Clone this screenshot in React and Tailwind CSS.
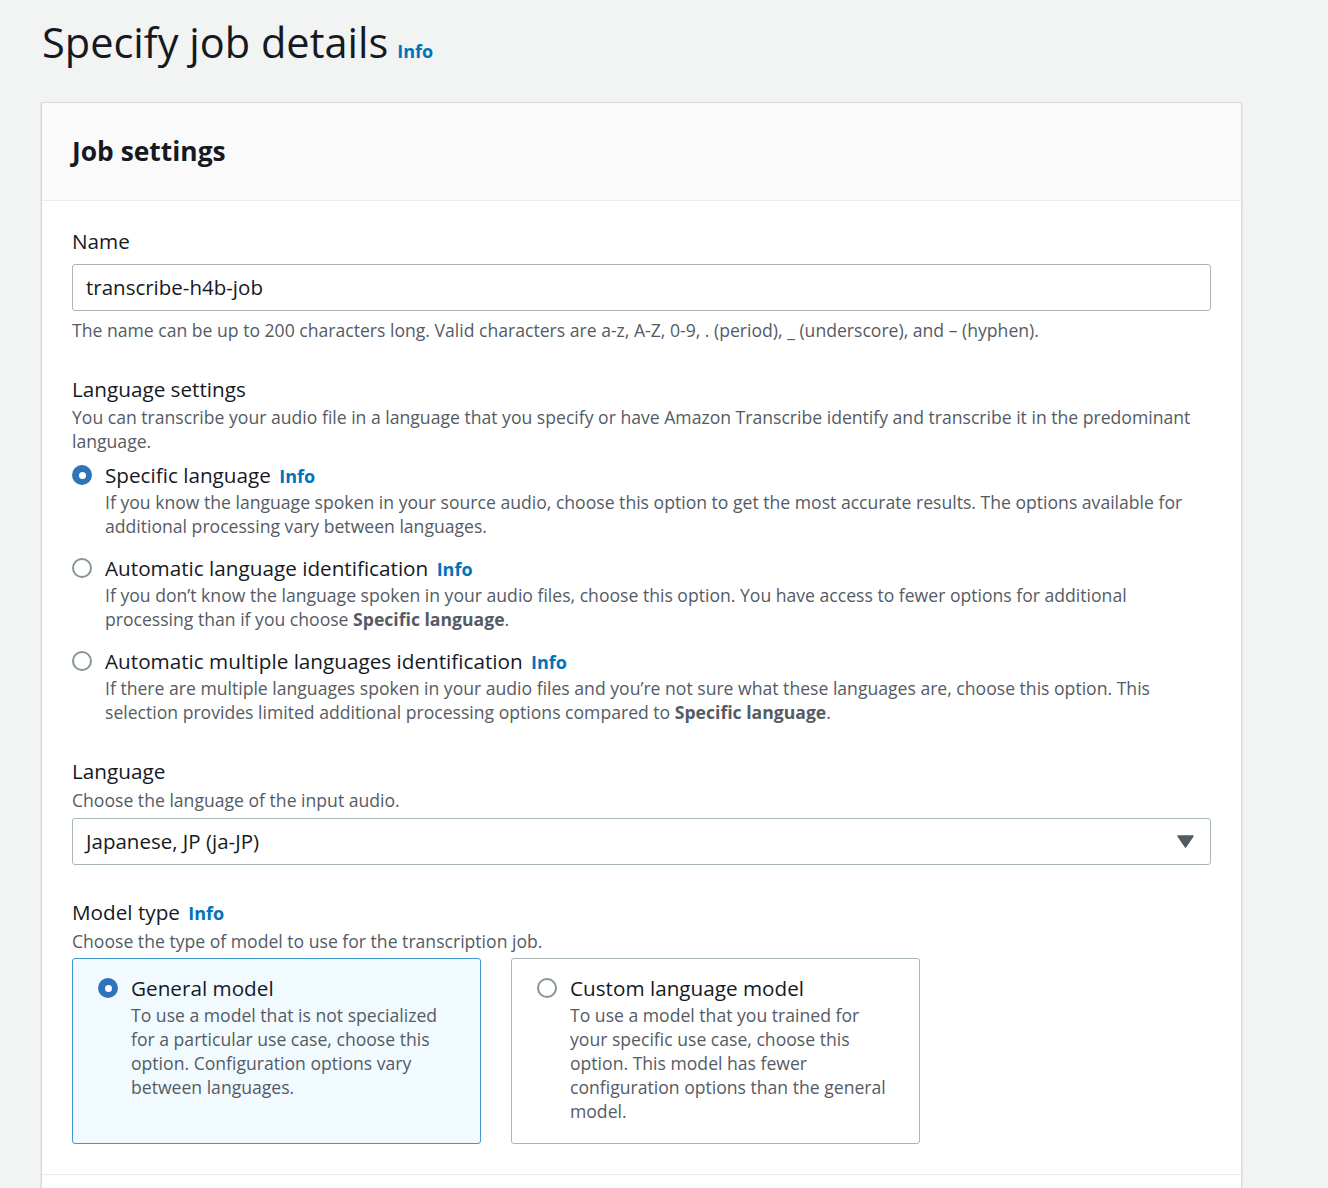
import React, { useState } from "react"

// small blue "Info" link used beside labels
const Info = ({ className = "" }) => (
  <span className={`font-bold text-[#0073bb] ${className}`}>Info</span>
)

const Radio = ({ checked }) =>
  checked ? (
    <span className="flex h-[20px] w-[20px] shrink-0 items-center justify-center rounded-full bg-[#2f73b8]">
      <span className="block h-[7px] w-[7px] rounded-full bg-white" />
    </span>
  ) : (
    <span className="block h-[20px] w-[20px] shrink-0 rounded-full border-2 border-[#879596] bg-white" />
  )

const LangOption = ({ checked, title, children }) => (
  <div className="flex gap-[13px]">
    <div className="pt-[4px]">
      <Radio checked={checked} />
    </div>
    <div>
      <div className="text-[20.7px] leading-[28px] text-[#16191f]">
        {title} <Info className="ml-[3px] text-[18px]" />
      </div>
      <div className="text-[17.6px] leading-[24px] text-[#545b64]">{children}</div>
    </div>
  </div>
)

const Tile = ({ checked, title, children }) => (
  <div
    className={`w-[409px] rounded-[3px] border px-[25px] pb-[20px] pt-[15px] ${
      checked ? "border-[#3d9ad1] bg-[#f1faff]" : "border-[#aab7b8] bg-white"
    }`}
  >
    <div className="flex gap-[13px]">
      <div className="pt-[4px]">
        <Radio checked={checked} />
      </div>
      <div>
        <div className="text-[20.7px] leading-[28px] text-[#16191f]">{title}</div>
        <div className="mt-[1px] text-[17.6px] leading-[24px] text-[#545b64]">{children}</div>
      </div>
    </div>
  </div>
)

export default function App() {
  const [name] = useState("transcribe-h4b-job")

  return (
    <div
      className="min-h-screen bg-[#f2f3f3] pl-[41px] pr-[86px] pt-[15px]"
      style={{ fontFamily: "'Open Sans', 'Noto Sans', sans-serif" }}
    >
      <div className="flex items-baseline gap-[9px] pl-[1px]">
        <h1 className="text-[41.5px] leading-[54px] text-[#16191f]">Specify job details</h1>
        <Info className="text-[18px]" />
      </div>

      {/* CARD */}
      <div className="mt-[33px] border border-[#d5dbdb] bg-white shadow-[0_1px_1px_rgba(0,28,36,0.3)]">
        <div className="flex h-[98px] items-center border-b border-[#eaeded] bg-[#fafafa] px-[30px]">
          <h2 className="text-[26.4px] font-bold text-[#16191f]">Job settings</h2>
        </div>

        <div className="px-[30px] pt-[26px]">
          {/* NAME */}
          <div className="text-[20.7px] leading-[28px] text-[#16191f]">Name</div>
          <div className="mt-[9px] flex h-[47px] items-center rounded-[3px] border border-[#aab7b8] px-[13px] text-[20.5px] text-[#16191f]">
            {name}
          </div>
          <div className="mt-[7px] text-[17.6px] leading-[24px] text-[#545b64]">
            The name can be up to 200 characters long. Valid characters are a-z, A-Z, 0-9, . (period), _ (underscore), and – (hyphen).
          </div>

          {/* LANGUAGE SETTINGS */}
          <div className="mt-[33px] text-[20.7px] leading-[28px] text-[#16191f]">Language settings</div>
          <div className="mt-[2px] text-[17.6px] leading-[24px] text-[#545b64]">
            You can transcribe your audio file in a language that you specify or have Amazon Transcribe identify and transcribe it in the predominant language.
          </div>
          <div className="mt-[8px] flex flex-col gap-[16px]">
            <LangOption checked title="Specific language">
              If you know the language spoken in your source audio, choose this option to get the most accurate results. The options available for additional processing vary between languages.
            </LangOption>
            <LangOption title="Automatic language identification">
              If you don’t know the language spoken in your audio files, choose this option. You have access to fewer options for additional processing than if you choose <b>Specific language</b>.
            </LangOption>
            <LangOption title="Automatic multiple languages identification">
              If there are multiple languages spoken in your audio files and you’re not sure what these languages are, choose this option. This selection provides limited additional processing options compared to <b>Specific language</b>.
            </LangOption>
          </div>

          {/* LANGUAGE */}
          <div className="mt-[33px] text-[20.7px] leading-[28px] text-[#16191f]">Language</div>
          <div className="mt-[3px] text-[17.6px] leading-[24px] text-[#545b64]">Choose the language of the input audio.</div>
          <div className="mt-[6px] flex h-[47px] items-center justify-between rounded-[3px] border border-[#aab7b8] pl-[13px] pr-[16px] text-[20.5px] text-[#16191f]">
            <span>Japanese, JP (ja-JP)</span>
            <svg width="17" height="13" viewBox="0 0 17 13">
              <path d="M1 1 L16 1 L8.5 12 Z" fill="#545b64" stroke="#545b64" strokeWidth="1.5" strokeLinejoin="round" />
            </svg>
          </div>

          {/* MODEL TYPE */}
          <div className="mt-[33px] text-[20.7px] leading-[28px] text-[#16191f]">
            Model type <Info className="ml-[3px] text-[18px]" />
          </div>
          <div className="mt-[2px] text-[17.6px] leading-[24px] text-[#545b64]">
            Choose the type of model to use for the transcription job.
          </div>
          <div className="mt-[5px] flex gap-[30px] pb-[30px]">
            <Tile checked title="General model">
              To use a model that is not specialized for a particular use case, choose this option. Configuration options vary between languages.
            </Tile>
            <Tile title="Custom language model">
              To use a model that you trained for your specific use case, choose this option. This model has fewer configuration options than the general model.
            </Tile>
          </div>
        </div>
        <div className="h-[60px] border-t border-[#eaeded]" />
      </div>
    </div>
  )
}
